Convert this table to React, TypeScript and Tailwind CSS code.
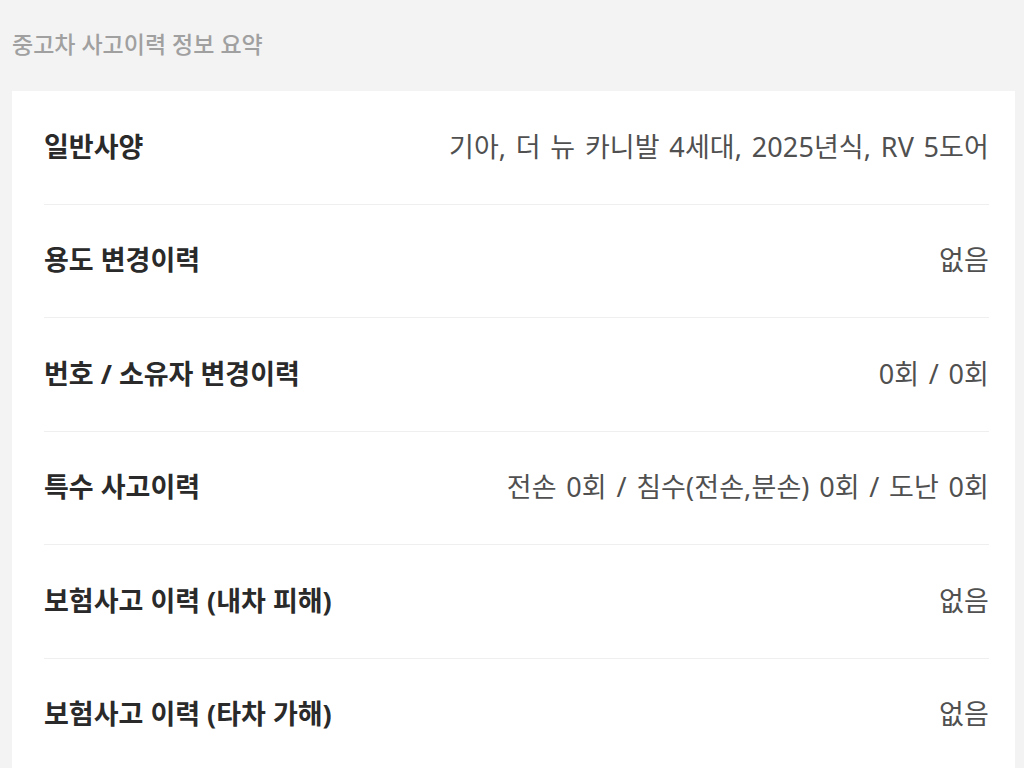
import React from "react";

const rows: [string, string][] = [
  ["일반사양", "기아, 더 뉴 카니발 4세대, 2025년식, RV 5도어"],
  ["용도 변경이력", "없음"],
  ["번호 / 소유자 변경이력", "0회 / 0회"],
  ["특수 사고이력", "전손 0회 / 침수(전손,분손) 0회 / 도난 0회"],
  ["보험사고 이력 (내차 피해)", "없음"],
  ["보험사고 이력 (타차 가해)", "없음"],
];

export default function App() {
  return (
    <div
      className="w-[1024px] h-[768px] overflow-hidden bg-[#f3f3f3]"
      style={{ fontFamily: '"Noto Sans", "Noto Sans CJK KR", sans-serif' }}
    >
      <div className="h-[91px] flex items-center pl-[12px] pb-[2px]">
        <h2 className="text-[23px] text-[#a0a0a0] tracking-[0px] font-medium">중고차 사고이력 정보 요약</h2>
      </div>
      <div className="ml-[12px] mr-[9px] bg-white pl-[32px] pr-[26px]">
        {rows.map(([k, v], i) => (
          <div
            key={i}
            className="h-[113.5px] flex items-center justify-between border-b border-[#efefef] pb-[1px]"
          >
            <span className="text-[27px] font-bold text-[#2a2a2a] tracking-[0px]">{k}</span>
            <span className="text-[27px] text-[#505050] tracking-[0.1px] [word-spacing:2.5px]">{v}</span>
          </div>
        ))}
      </div>
    </div>
  );
}
